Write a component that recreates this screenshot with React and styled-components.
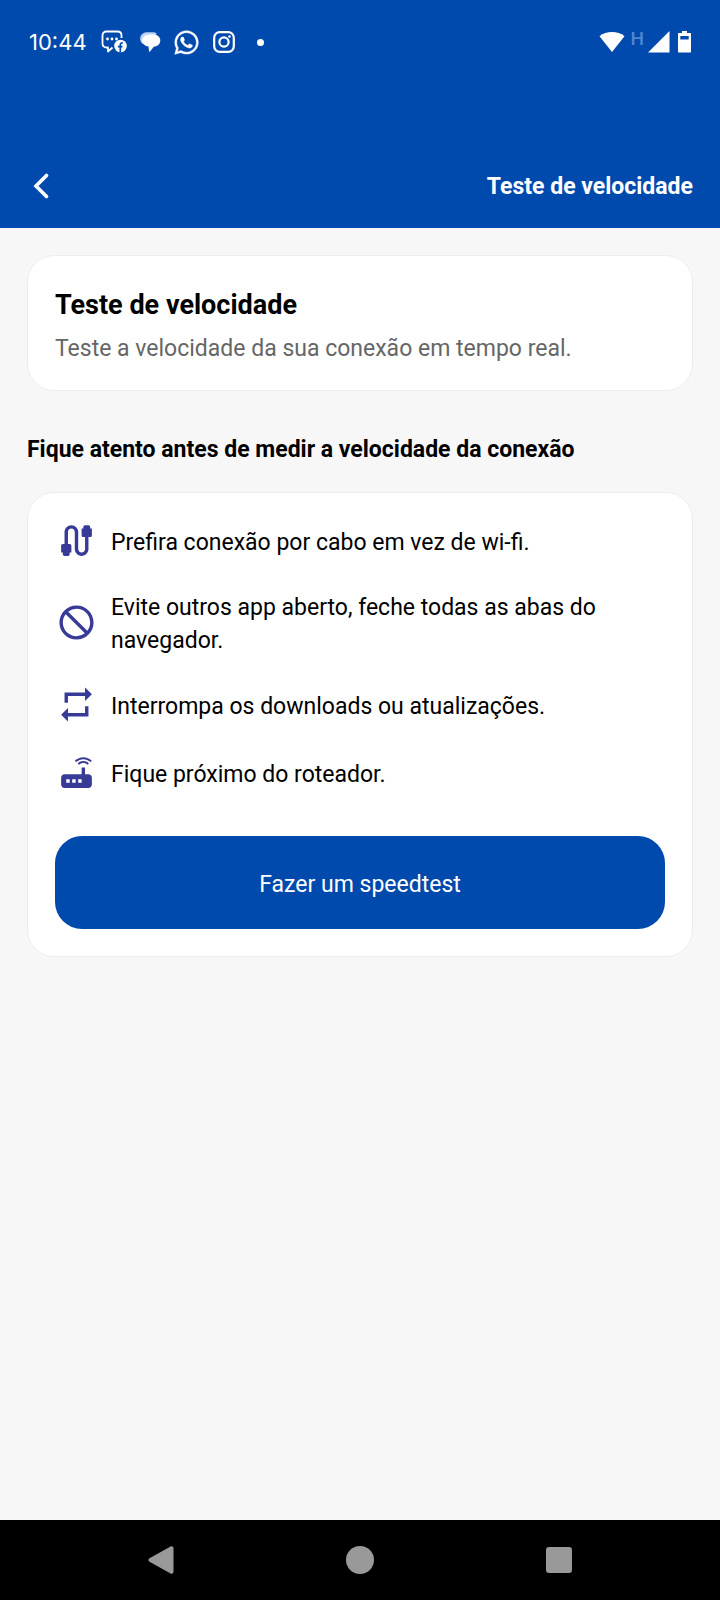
import styled, { createGlobalStyle } from "styled-components";
import { MdCable, MdNotInterested, MdRepeat, MdRouter } from "react-icons/md";
import { FaWhatsapp } from "react-icons/fa";

const tips = [
  { icon: MdCable, text: "Prefira conexão por cabo em vez de wi-fi." },
  { icon: MdNotInterested, text: "Evite outros app aberto, feche todas as abas do navegador." },
  { icon: MdRepeat, text: "Interrompa os downloads ou atualizações." },
  { icon: MdRouter, text: "Fique próximo do roteador." },
];

export default function App(){
  return(
    <Screen>
      <GlobalStyle/>
      <TopArea>
        <StatusBar/>
        <Header>
          <BackButton type="button" aria-label="Voltar">
            <svg width="16" height="26" viewBox="0 0 16 26" fill="none" stroke="#fff" strokeWidth="3.600" strokeLinecap="round">
              <path d="M13.500 2.500L3 13l10.500 10.500"/>
            </svg>
          </BackButton>
          <HeaderTitle>Teste de velocidade</HeaderTitle>
        </Header>
      </TopArea>
      <Content>
        <Card>
          <CardTitle>Teste de velocidade</CardTitle>
          <CardText>Teste a velocidade da sua conexão em tempo real.</CardText>
        </Card>
        <SectionTitle>Fique atento antes de medir a velocidade da conexão</SectionTitle>
        <Card>
          <TipList>
            {tips.map(({ icon: Icon, text }) => (
              <Tip key={text}>
                <Icon size={41}/>
                <p>{text}</p>
              </Tip>
            ))}
          </TipList>
          <TestButton type="button">Fazer um speedtest</TestButton>
        </Card>
      </Content>
      <NavBar/>
    </Screen>
  );
}

function StatusBar(){
  return(
    <StatusContainer>
      <Clock>10:44</Clock>
      <Notifications>
        <svg width="26" height="24" viewBox="0 0 26 24" fill="none">
          <path d="M11.500 17.500L7 21.500v-4H5.500c-2.500 0-4-1.500-4-4v-8c0-2.500 1.500-4 4-4h11c2.500 0 4 1.500 4 4V8" stroke="#fff" strokeWidth="1.800" strokeLinejoin="round"/>
          <circle cx="6.500" cy="9" r="1.400" fill="#fff"/>
          <circle cx="11" cy="9" r="1.400" fill="#fff"/>
          <circle cx="15.500" cy="9" r="1.400" fill="#fff"/>
          <circle cx="19.500" cy="16" r="6.300" fill="#fff"/>
          <path d="M19.300 22.300v-7.300c0-1.500.8-2.200 2.500-2M17 16.700h4.500" stroke="#004aad" strokeWidth="1.700"/>
        </svg>
        <svg width="22" height="22" viewBox="0 0 22 22">
          <path d="M3.500 13C-.5 9.500.5 2 7.500 1.300H14c1.700 0 3 .6 4 1.500" fill="#b9d3f5"/>
          <path d="M10 3.400h4.500c4 0 6.800 2.600 6.800 6s-2.600 6-6.300 6.200l-4 5c-.4.400-.9.300-1-.3l-.5-4.700C5.800 14.800 3.200 12.600 3.200 9.400s2.800-6 6.800-6z" fill="#fff"/>
        </svg>
        <FaWhatsapp size={27} stroke="#fff" strokeWidth={8}/>
        <svg width="24" height="24" viewBox="0 0 24 24" fill="none" stroke="#fff" strokeWidth="2.200">
          <rect x="2.200" y="2.200" width="19.600" height="19.600" rx="5.500"/>
          <circle cx="12" cy="12" r="4.600"/>
          <circle cx="17.500" cy="6.500" r="1.300" fill="#fff" stroke="none"/>
        </svg>
        <Dot/>
      </Notifications>
      <Signals>
        <svg width="26" height="22" viewBox="0 0 26 22" fill="#fff">
          <path d="M13 21L.5 5.200C4 2.400 8.300 1 13 1s9 1.400 12.500 4.200z"/>
        </svg>
        <NetworkType>H</NetworkType>
        <svg width="22" height="22" viewBox="0 0 22 22" fill="#fff">
          <path d="M21.500 0v21.500H0z"/>
        </svg>
        <svg width="13" height="22" viewBox="0 0 13 22" fill="#fff">
          <path fillRule="evenodd" d="M4 0h5v2h3c.6 0 1 .4 1 1v17.500c0 .6-.4 1-1 1H1c-.6 0-1-.4-1-1V3c0-.6.4-1 1-1h3zM2.300 5v3.500h8.400V5z"/>
        </svg>
      </Signals>
    </StatusContainer>
  );
}

function NavBar(){
  return(
    <Nav>
      <NavButton type="button" aria-label="Voltar">
        <svg width="26" height="28" viewBox="0 0 26 28" fill="#999" stroke="#999" strokeWidth="4" strokeLinejoin="round">
          <path d="M2.500 14L23.500 2.300v23.400z"/>
        </svg>
      </NavButton>
      <NavButton type="button" aria-label="Início">
        <svg width="28" height="28" viewBox="0 0 28 28" fill="#999">
          <circle cx="14" cy="14" r="14"/>
        </svg>
      </NavButton>
      <NavButton type="button" aria-label="Recentes">
        <svg width="26" height="26" viewBox="0 0 26 26" fill="#999">
          <rect width="26" height="26" rx="3"/>
        </svg>
      </NavButton>
    </Nav>
  );
}

const GlobalStyle = createGlobalStyle`
  * {
    box-sizing: border-box;
    margin: 0;
    padding: 0;
  }
  body {
    background-color: #F7F7F7;
    font-family: Roboto, sans-serif;
  }
  button {
    border: none;
    background: none;
    font-family: inherit;
    cursor: pointer;
  }
  svg {
    display: block;
    flex-shrink: 0;
  }
`;
const Screen = styled.div`
  min-height: 100vh;

  display: flex;
  flex-direction: column;
`;
const TopArea = styled.div`
  background-color: #004AAD;
  color: #FFFFFF;
`;
const StatusContainer = styled.div`
  height: 84px;
  padding: 0 29px;

  display: flex;
  align-items: center;
`;
const Clock = styled.span`
  font-family: Inter, sans-serif;
  font-size: 22px;
`;
const Notifications = styled.div`
  margin-left: 14px;

  display: flex;
  align-items: center;
  gap: 12px;
`;
const Dot = styled.span`
  width: 7px;
  height: 7px;
  margin-left: 9px;

  border-radius: 50%;
  background-color: #FFFFFF;
`;
const Signals = styled.div`
  margin-left: auto;

  display: flex;
  align-items: center;
  gap: 8px;
`;
const NetworkType = styled.span`
  margin: 0 -4px 6px -2px;

  color: #4F86D0;
  font-size: 19px;
  font-weight: 500;
  line-height: 20px;
`;
const Header = styled.header`
  height: 144px;
  padding: 60px 27px 0;

  display: flex;
  justify-content: space-between;
  align-items: flex-start;
`;
const BackButton = styled.button`
  padding: 29px 6px;
`;
const HeaderTitle = styled.h1`
  font-size: 23px;
  line-height: 86px;
`;
const Content = styled.main`
  flex: 1;
  padding: 27px;

  color: #000000;
`;
const Card = styled.section`
  padding: 27px;

  background-color: #FFFFFF;
  border: 1px solid #EDEDED;
  border-radius: 27px;
`;
const CardTitle = styled.h2`
  font-size: 27px;
  line-height: 44px;
`;
const CardText = styled.p`
  margin-top: 7px;

  color: #666666;
  font-size: 23px;
  line-height: 29px;
`;
const SectionTitle = styled.h2`
  margin: 42px 0 26px;

  font-size: 23px;
  line-height: 33px;
`;
const TipList = styled.ul`
  padding-left: 1px;

  display: flex;
  flex-direction: column;
  gap: 27px;

  list-style: none;
`;
const Tip = styled.li`
  display: flex;
  align-items: center;
  gap: 14px;

  font-size: 23px;
  line-height: 33px;

  svg{
    color: #383A98;
  }
  p{
    padding-top: 3px;
  }
`;
const TestButton = styled.button`
  width: 100%;
  height: 93px;
  margin-top: 43px;
  padding-top: 3px;

  border-radius: 27px;
  background-color: #004AAD;

  color: #FFFFFF;
  font-size: 23px;
`;
const Nav = styled.nav`
  height: 80px;
  padding: 0 61px;

  background-color: #000000;

  display: grid;
  grid-template-columns: repeat(3, 1fr);
`;
const NavButton = styled.button`
  display: flex;
  align-items: center;
  justify-content: center;
`;
